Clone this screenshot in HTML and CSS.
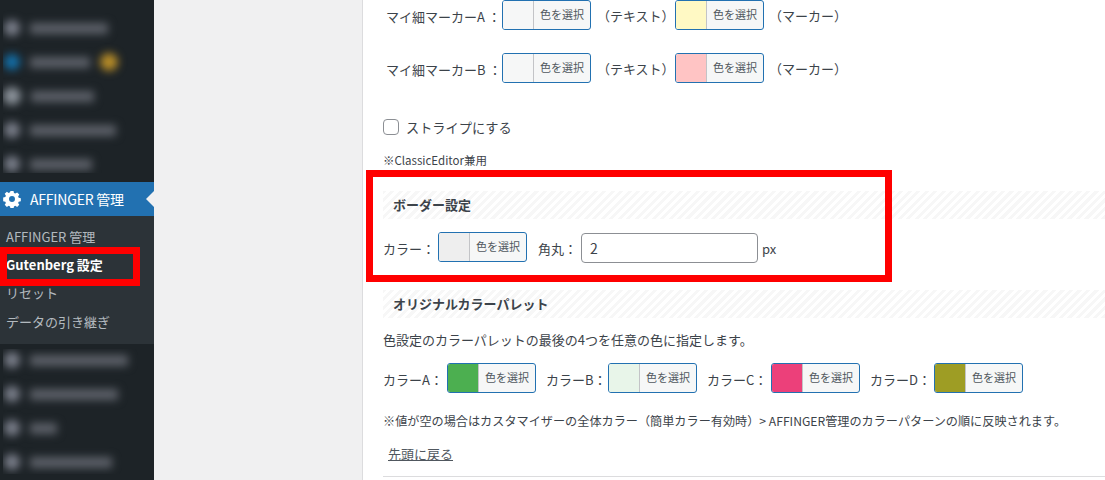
FILE: index.html
```html
<!DOCTYPE html>
<html lang="ja">
<head>
<meta charset="utf-8">
<title>AFFINGER 管理</title>
<link rel="stylesheet" href="styles.css">
</head>
<body>
<div class="app">
  <aside class="sidebar">
    <div class="blurred blurred-top">
      <div class="blur-item"><i class="bi"></i><b class="bb w78"></b></div>
      <div class="blur-item"><i class="bi bi-blue"></i><b class="bb w60"></b><i class="badge"></i></div>
      <div class="blur-item"><i class="bi bi-light"></i><b class="bb w63"></b></div>
      <div class="blur-item"><i class="bi"></i><b class="bb w86"></b></div>
      <div class="blur-item"><i class="bi"></i><b class="bb w62"></b></div>
    </div>
    <div class="menu-current">
      <svg class="gear" viewBox="0 0 20 20" aria-hidden="true"><path fill="#fff" fill-rule="evenodd" d="M8.300 1h3.400l.5 2.400 1.500.6 2-1.300 2.400 2.400-1.300 2 .6 1.500 2.400.5v3.400l-2.400.5-.6 1.500 1.300 2-2.400 2.400-2-1.300-1.500.6-.5 2.400H8.300l-.5-2.400-1.500-.6-2 1.300-2.400-2.400 1.300-2-.6-1.500-2.400-.5V8.300l2.400-.5.6-1.500-1.300-2 2.400-2.400 2 1.300 1.500-.6zM10 6.700a3.300 3.300 0 1 0 0 6.600 3.300 3.300 0 0 0 0-6.600z"/></svg>
      <span>AFFINGER 管理</span>
      <i class="arrow"></i>
    </div>
    <nav class="submenu">
      <a>AFFINGER 管理</a>
      <a class="on">Gutenberg 設定</a>
      <a>リセット</a>
      <a>データの引き継ぎ</a>
    </nav>
    <div class="blurred blurred-bottom">
      <div class="blur-item"><i class="bi"></i><b class="bb w98"></b></div>
      <div class="blur-item"><i class="bi"></i><b class="bb w88"></b></div>
      <div class="blur-item"><i class="bi"></i><b class="bb w27"></b></div>
      <div class="blur-item"><i class="bi"></i><b class="bb w82"></b></div>
    </div>
  </aside>
  <div class="gutter"></div>
  <main class="panel">
    <div class="row row-marker">
      <span class="mlabel">マイ細マーカーA ：</span>
      <button class="picker"><i class="sw s-f6"></i><span>色を選択</span></button>
      <span class="t1">（テキスト）</span>
      <button class="picker"><i class="sw s-yellow"></i><span>色を選択</span></button>
      <span class="t2">（マーカー）</span>
    </div>
    <div class="row row-marker second">
      <span class="mlabel">マイ細マーカーB ：</span>
      <button class="picker"><i class="sw s-f6"></i><span>色を選択</span></button>
      <span class="t1">（テキスト）</span>
      <button class="picker"><i class="sw s-pink"></i><span>色を選択</span></button>
      <span class="t2">（マーカー）</span>
    </div>
    <label class="check"><i class="box"></i><span>ストライプにする</span></label>
    <p class="small">※ClassicEditor兼用</p>
    <h3 class="stripe first">ボーダー設定</h3>
    <div class="row border-row">
      <span class="lbl">カラー：</span>
      <button class="picker"><i class="sw s-ee"></i><span>色を選択</span></button>
      <span class="lbl corner">角丸：</span>
      <span class="input">2</span>
      <span class="px">px</span>
    </div>
    <h3 class="stripe second-h">オリジナルカラーパレット</h3>
    <p class="desc">色設定のカラーパレットの最後の4つを任意の色に指定します。</p>
    <div class="row palette">
      <span class="plabel">カラーA：</span>
      <button class="picker"><i class="sw s-a"></i><span>色を選択</span></button>
      <span class="plabel">カラーB：</span>
      <button class="picker"><i class="sw s-b"></i><span>色を選択</span></button>
      <span class="plabel wide">カラーC：</span>
      <button class="picker"><i class="sw s-c"></i><span>色を選択</span></button>
      <span class="plabel wide">カラーD：</span>
      <button class="picker"><i class="sw s-d"></i><span>色を選択</span></button>
    </div>
    <p class="note">※値が空の場合はカスタマイザーの全体カラー（簡単カラー有効時）&gt; AFFINGER管理のカラーパターンの順に反映されます。</p>
    <a class="back">先頭に戻る</a>
    <hr class="rule">
  </main>
</div>
<div class="red red-side"></div>
<div class="red red-main"></div>
</body>
</html>
```
FILE: styles.css
```css
* { box-sizing: border-box; }
html, body { margin: 0; height: 480px; overflow: hidden; background: #f0f0f1; }
body { font-family: "Noto Sans CJK JP", "Noto Sans", sans-serif; font-size: 13px; color: #3c434a; }
.app { display: flex; height: 480px; }

.sidebar { width: 154px; flex: none; background: #1d2327; display: flex; flex-direction: column; }
.blurred { overflow: hidden; margin-left: 3px; }
.blurred-top { height: 173px; padding-top: 11px; margin-bottom: 9px; }
.blurred-bottom { height: 125px; margin-top: 5px; }
.blurred-bottom .blur-item:first-child { margin-top: -6px; }
.blur-item { height: 34px; display: flex; align-items: center; filter: blur(4.500px); }
.bi { width: 16px; height: 16px; margin-left: 1px; border-radius: 50%; background: #7a7e8a; flex: none; }
.bi-blue { background: #136fa8; }
.bi-light { background: #8b929a; width: 18px; height: 18px; margin-left: 0; }
.bb { display: block; height: 11px; margin-left: 10px; background: #5c6068; flex: none; }
.w27 { width: 27px; } .w60 { width: 60px; } .w62 { width: 62px; } .w63 { width: 63px; }
.w78 { width: 78px; } .w82 { width: 82px; } .w86 { width: 86px; } .w88 { width: 88px; } .w98 { width: 98px; }
.badge { width: 18px; height: 18px; margin-left: 10px; border-radius: 50%; background: #b88d28; flex: none; }

.menu-current { height: 34px; background: #2271b1; color: #fff; display: flex; align-items: center; position: relative; font-size: 14px; flex: none; }
.gear { width: 18px; height: 18px; margin-left: 3px; flex: none; }
.menu-current span { margin-left: 9px; white-space: nowrap; letter-spacing: -.2px; }
.arrow { position: absolute; right: 0; top: 9px; width: 0; height: 0; border: 8px solid transparent; border-left-width: 0; border-right-color: #f0f0f1; }

.submenu { height: 128px; background: #2c3338; padding-top: 7px; flex: none; }
.submenu a { display: block; height: 28.200px; line-height: 28px; padding-left: 6px; color: rgba(240,246,252,.7); font-size: 13px; white-space: nowrap; }
.submenu a.on { color: #fff; font-weight: 700; }

.gutter { width: 209px; flex: none; background: #f0f0f1; border-right: 1px solid #dcdcde; }
.panel { flex: 1; min-width: 0; background: #fff; padding-left: 20px; }

.row { display: flex; align-items: center; height: 30px; }
.picker { width: 89px; height: 30px; flex: none; padding: 0; display: flex; border: 1px solid #2271b1; border-radius: 3px; background: #f6f7f7; overflow: hidden; font: inherit; font-size: 11px; color: #50575e; }
.sw { width: 31px; height: 100%; flex: none; border-right: 1px solid #c3c4c7; }
.picker span { flex: 1; line-height: 26px; text-align: center; white-space: nowrap; }
.s-f6 { background: #f6f7f7; }
.s-yellow { background: #fff9c4; }
.s-pink { background: #ffc4c4; }
.s-ee { background: #eeeeee; }
.s-a { background: #4caf50; }
.s-b { background: #e8f5e9; }
.s-c { background: #ec407a; }
.s-d { background: #9e9d24; }

.mlabel { width: 119px; padding-left: 3px; flex: none; padding-top: 3px; white-space: nowrap; }
.t1 { width: 84px; padding-left: 6px; flex: none; white-space: nowrap; }
.t2 { padding-left: 5px; white-space: nowrap; }
.row-marker.second { margin-top: 23px; }

.check { display: flex; align-items: center; height: 20px; margin-top: 34px; }
.box { width: 16px; height: 16px; border: 1px solid #8c8f94; border-radius: 4px; background: #fff; flex: none; }
.check span { margin-left: 7px; font-size: 13.200px; white-space: nowrap; }
.small { margin: 15px 0 0; font-size: 11.500px; line-height: 16px; white-space: nowrap; }

.stripe { margin: 0; height: 28px; line-height: 28px; padding-left: 10px; font-size: 13px; font-weight: 700; color: #3c434a; background: repeating-linear-gradient(-45deg, #f7f7f7 0 3px, #fff 3px 6px); }
.stripe.first { margin-top: 23px; }
.border-row { margin-top: 13px; }
.lbl { width: 55px; flex: none; white-space: nowrap; padding-top: 2px; }
.corner { width: 43px; margin-left: 11px; }
.input { width: 177px; height: 30px; margin-top: 2px; line-height: 28px; padding-left: 8px; border: 1px solid #8c8f94; border-radius: 4px; background: #fff; flex: none; font-size: 14px; }
.px { margin-left: 4px; padding-top: 2px; }
.second-h { margin-top: 28px; }
.desc { margin: 13px 0 0; line-height: 18px; white-space: nowrap; }
.palette { margin-top: 14px; }
.plabel { width: 64px; flex: none; white-space: nowrap; padding-top: 2px; }
.picker + .plabel { width: 62px; margin-left: 10px; }
.picker + .plabel.wide { width: 64px; }
.note { margin: 19px 0 0; line-height: 18px; font-size: 12.150px; white-space: nowrap; }
.back { display: block; margin: 15px 0 0 5px; line-height: 18px; color: #50575e; text-decoration: underline; white-space: nowrap; }
.rule { margin: 13px 0 0; border: 0; border-top: 1px solid #dcdcde; }

.red { position: absolute; border: 7px solid #f00; pointer-events: none; }
.red-side { left: 0; top: 247px; width: 140px; height: 39px; }
.red-main { left: 366px; top: 170px; width: 526px; height: 112px; }
```
